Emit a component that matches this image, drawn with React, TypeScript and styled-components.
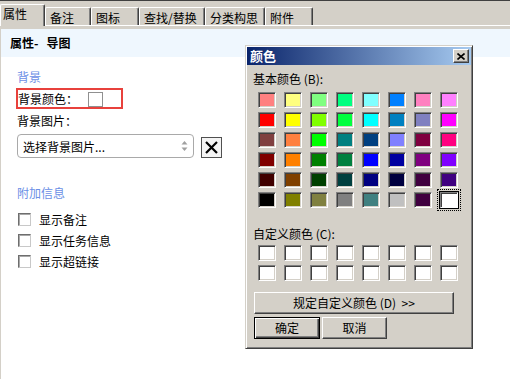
import styled, { createGlobalStyle } from "styled-components";

const GlobalStyle = createGlobalStyle`
  html, body {
    margin: 0;
    padding: 0;
    background: #fff;
  }
  body {
    font-family: "Noto Sans CJK SC", "Noto Sans", sans-serif;
    font-size: 12px;
    color: #000;
  }
`;

const tabs = [
  { label: "属性", width: 45 },
  { label: "备注", width: 46 },
  { label: "图标", width: 48 },
  { label: "查找/替换", width: 66 },
  { label: "分类构思", width: 60 },
  { label: "附件", width: 48 },
];

const basicColors = [
  ["#FF8080", "#FFFF80", "#80FF80", "#00FF80", "#80FFFF", "#0080FF", "#FF80C0", "#FF80FF"],
  ["#FF0000", "#FFFF00", "#80FF00", "#00FF40", "#00FFFF", "#0080C0", "#8080C0", "#FF00FF"],
  ["#804040", "#FF8040", "#00FF00", "#008080", "#004080", "#8080FF", "#800040", "#FF0080"],
  ["#800000", "#FF8000", "#008000", "#008040", "#0000FF", "#0000A0", "#800080", "#8000FF"],
  ["#400000", "#804000", "#004000", "#004040", "#000080", "#000040", "#400040", "#400080"],
  ["#000000", "#808000", "#808040", "#808080", "#408080", "#C0C0C0", "#400040", "#FFFFFF"],
];

const Page = styled.div`
  position: relative;
  width: 510px;
  height: 379px;
  overflow: hidden;
  background: #fff;
`;

const TabStrip = styled.div`
  height: 28px;
  background: #d4d0c8;
  border-top: 1px solid #404040;
`;

const TabRow = styled.div`
  display: flex;
  align-items: flex-end;
  height: 24px;
  border-bottom: 1px solid #fff;
`;

const Tab = styled.div<{ $w: number; $active?: boolean }>`
  position: relative;
  box-sizing: border-box;
  width: ${(p) => p.$w}px;
  height: ${(p) => (p.$active ? 22 : 18)}px;
  margin-bottom: ${(p) => (p.$active ? -1 : 0)}px;
  padding: ${(p) => (p.$active ? "1px 0 0 2px" : "2px 0 0 4px")};
  background: #d4d0c8;
  border-top: 1px solid #fff;
  border-left: 1px solid #fff;
  border-right: 1px solid #404040;
  box-shadow: inset -1px 0 #808080;
  border-radius: 2px 2px 0 0;
  font-size: 12px;
  line-height: 16px;
  white-space: nowrap;
  z-index: ${(p) => (p.$active ? 1 : 0)};
`;

const Panel = styled.div`
  border-left: 1px solid #d4d0c8;
  height: 350px;
`;

const Header = styled.div`
  height: 28px;
  line-height: 28px;
  padding-left: 9px;
  background: #eff7fe;
  font-weight: bold;
  font-size: 12px;
`;

const HeaderGap = styled.span`
  display: inline-block;
  width: 8px;
`;

const Body = styled.div`
  padding-left: 16px;
`;

const SectionTitle = styled.div<{ $top: number }>`
  margin-top: ${(p) => p.$top}px;
  line-height: 16px;
  color: #6b8fe6;
`;

const Highlight = styled.div`
  box-sizing: border-box;
  display: flex;
  align-items: center;
  width: 107px;
  height: 21px;
  margin: 3px 0 0 -1px;
  border: 2px solid #e8413c;
  line-height: 16px;
`;

const ColorBox = styled.div`
  box-sizing: border-box;
  width: 15px;
  height: 15px;
  margin: 1px 0 0 10px;
  border: 1px solid #909090;
  background: #fff;
`;

const FieldLabel = styled.div`
  margin-top: 4px;
  line-height: 16px;
`;

const SelectRow = styled.div`
  display: flex;
  align-items: flex-end;
  margin-top: 5px;
`;

const Select = styled.div`
  box-sizing: border-box;
  display: flex;
  align-items: center;
  justify-content: space-between;
  width: 177px;
  height: 24px;
  padding: 0 5px 0 5px;
  border: 1px solid #a9a9a9;
  border-radius: 4px;
  background: #fff;
`;

const ClearButton = styled.div`
  box-sizing: border-box;
  display: flex;
  align-items: center;
  justify-content: center;
  width: 21px;
  height: 21px;
  margin-left: 7px;
  border: 1px solid #505050;
  background: #f4f4f4;
`;

const CheckList = styled.div`
  margin-top: 8px;
`;

const CheckRow = styled.div`
  display: flex;
  align-items: center;
  height: 21px;
  padding-left: 1px;
`;

const CheckBox = styled.div`
  box-sizing: border-box;
  width: 13px;
  height: 13px;
  margin-right: 8px;
  border: 1px solid;
  border-color: #6e6e6e #c8c8c8 #c8c8c8 #6e6e6e;
  box-shadow: inset 1px 1px #a8a8a8;
  background: #fff;
`;

/* the color picker window floats over the panel */
const Dialog = styled.div`
  position: absolute;
  left: 245px;
  top: 45px;
  box-sizing: border-box;
  width: 228px;
  height: 304px;
  padding: 1px;
  background: #d4d0c8;
  border: 1px solid;
  border-color: #d4d0c8 #404040 #404040 #d4d0c8;
  box-shadow: inset 1px 1px #fff, inset -1px -1px #808080;
  font-size: 12px;
`;

const TitleBar = styled.div`
  display: flex;
  align-items: center;
  justify-content: space-between;
  height: 18px;
  padding: 0 2px 0 3px;
  background: linear-gradient(to right, #0a246a, #a6caf0);
  color: #fff;
  font-weight: bold;
  font-size: 13px;
  line-height: 18px;
`;

const raised = `
  background: #d4d0c8;
  border: 1px solid;
  border-color: #fff #404040 #404040 #fff;
  box-shadow: inset -1px -1px #808080;
`;

const CloseButton = styled.div`
  box-sizing: border-box;
  display: flex;
  align-items: center;
  justify-content: center;
  width: 16px;
  height: 14px;
  ${raised}
`;

const DialogLabel = styled.div<{ $top: number }>`
  margin: ${(p) => p.$top}px 0 0 6px;
  line-height: 16px;
  white-space: pre;
`;

const SwatchGrid = styled.div<{ $top: number }>`
  display: grid;
  grid-template-columns: repeat(8, 18px);
  grid-auto-rows: 16px;
  column-gap: 8px;
  row-gap: 4px;
  margin: ${(p) => p.$top}px 0 0 11px;
`;

const Swatch = styled.div<{ $color: string; $selected?: boolean }>`
  box-sizing: border-box;
  background: ${(p) => p.$color};
  border: 1px solid;
  border-color: #808080 #fff #fff #808080;
  box-shadow: ${(p) =>
    p.$selected
      ? "0 0 0 1px #000, inset 1px 1px #404040"
      : "inset 1px 1px #404040, inset -1px -1px #d4d0c8"};
  outline: ${(p) => (p.$selected ? "1px dotted #000" : "none")};
  outline-offset: 2px;
`;

const WideButton = styled.div`
  box-sizing: border-box;
  width: 200px;
  height: 22px;
  margin: 11px 0 0 7px;
  text-align: center;
  line-height: 20px;
  white-space: pre;
  ${raised}
`;

const ButtonRow = styled.div`
  display: flex;
  gap: 2px;
  margin: 3px 0 0 7px;
`;

const PushButton = styled.div<{ $w: number; $default?: boolean }>`
  box-sizing: border-box;
  width: ${(p) => p.$w}px;
  height: 22px;
  text-align: center;
  line-height: 20px;
  ${raised}
  ${(p) =>
    p.$default &&
    `
    border-color: #000;
    box-shadow: inset 1px 1px #fff, inset -1px -1px #404040, inset -2px -2px #808080;
  `}
`;

export default function App() {
  return (
    <Page>
      <GlobalStyle />
      <TabStrip>
        <TabRow>
          {tabs.map((t, i) => (
            <Tab key={t.label} $w={t.width} $active={i === 0}>
              {t.label}
            </Tab>
          ))}
        </TabRow>
      </TabStrip>
      <Panel>
        <Header>
          属性-<HeaderGap />导图
        </Header>
        <Body>
          <SectionTitle $top={12}>背景</SectionTitle>
          <Highlight>
            背景颜色：
            <ColorBox />
          </Highlight>
          <FieldLabel>背景图片：</FieldLabel>
          <SelectRow>
            <Select>
              <span>选择背景图片...</span>
              <svg width="7" height="12" viewBox="0 0 7 12">
                <path d="M3.5 1 L6.5 4.5 L0.5 4.5 Z" fill="#a0a0a0" />
                <path d="M3.5 11 L6.5 7.5 L0.5 7.5 Z" fill="#a0a0a0" />
              </svg>
            </Select>
            <ClearButton>
              <svg width="15" height="15" viewBox="0 0 15 15">
                <path d="M2 2 L13 13 M13 2 L2 13" stroke="#000" strokeWidth="2.2" />
              </svg>
            </ClearButton>
          </SelectRow>
          <SectionTitle $top={27}>附加信息</SectionTitle>
          <CheckList>
            {["显示备注", "显示任务信息", "显示超链接"].map((l) => (
              <CheckRow key={l}>
                <CheckBox />
                {l}
              </CheckRow>
            ))}
          </CheckList>
        </Body>
      </Panel>

      <Dialog>
        <TitleBar>
          颜色
          <CloseButton>
            <svg width="8" height="7" viewBox="0 0 8 7">
              <path d="M0.5 0.5 L7.5 6.5 M7.5 0.5 L0.5 6.5" stroke="#000" strokeWidth="1.6" />
            </svg>
          </CloseButton>
        </TitleBar>
        <DialogLabel $top={6}>基本颜色 (B):</DialogLabel>
        <SwatchGrid $top={5}>
          {basicColors.flat().map((c, i) => (
            <Swatch key={i} $color={c} $selected={i === 47} />
          ))}
        </SwatchGrid>
        <DialogLabel $top={18}>自定义颜色 (C):</DialogLabel>
        <SwatchGrid $top={3}>
          {Array.from({ length: 16 }).map((_, i) => (
            <Swatch key={i} $color="#fff" />
          ))}
        </SwatchGrid>
        <WideButton>规定自定义颜色 (D)  &gt;&gt;</WideButton>
        <ButtonRow>
          <PushButton $w={66} $default>
            确定
          </PushButton>
          <PushButton $w={65}>取消</PushButton>
        </ButtonRow>
      </Dialog>
    </Page>
  );
}
